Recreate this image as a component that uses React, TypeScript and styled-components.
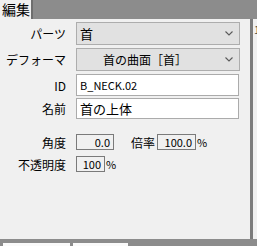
import React from "react";
import styled, { createGlobalStyle } from "styled-components";

const GlobalStyle = createGlobalStyle`
  html, body {
    margin: 0;
    padding: 0;
    background: #8c8c8c;
  }
  * {
    box-sizing: border-box;
  }
`;

const Frame = styled.div`
  width: 257px;
  height: 246px;
  display: grid;
  grid-template-rows: 19px 220px 1fr;
  background: #8c8c8c;
  overflow: hidden;
  font-family: "Noto Sans CJK JP", "Noto Sans", sans-serif;
  font-size: 12px;
  color: #000;
`;

const TabStrip = styled.div`
  display: flex;
  align-items: stretch;
`;

const Tab = styled.div`
  width: 33px;
  background: #f0f0f0;
  border-right: 2px solid #6e6e6e;
  font-size: 14px;
  line-height: 19px;
  padding-left: 2px;
`;

const Middle = styled.div`
  display: flex;
`;

const Panel = styled.div`
  width: 250px;
  background: #f0f0f0;
  display: flex;
  flex-direction: column;
  padding-top: 3px;
`;

const SideBorder = styled.div`
  width: 3px;
  background: #7c7c7c;
`;

const SidePane = styled.div`
  flex: 1;
  background: #f0f0f0;
  font-size: 11px;
  line-height: 14px;
  padding-top: 3px;
  padding-left: 1px;
  color: #444;
  overflow: hidden;
`;

const Row = styled.div<{ $h: number; $gap?: number }>`
  display: flex;
  align-items: center;
  height: ${(p) => p.$h}px;
  margin-bottom: ${(p) => p.$gap ?? 3}px;
`;

const Label = styled.div`
  width: 66px;
  text-align: right;
  margin-right: 10px;
  white-space: nowrap;
`;

const Select = styled.div<{ $center?: boolean }>`
  width: 164px;
  height: 100%;
  background: #e1e1e1;
  border: 1px solid #adadad;
  display: flex;
  align-items: center;
  padding-left: ${(p) => (p.$center ? 26 : 3)}px;
  padding-right: 6px;
  font-size: ${(p) => (p.$center ? 12 : 13)}px;
`;

const SelectText = styled.span`
  flex: 1;
  white-space: nowrap;
`;

const TextBox = styled.div<{ $latin?: boolean }>`
  width: 163px;
  height: 100%;
  background: #fff;
  border: 1px solid #ababab;
  display: flex;
  align-items: center;
  padding-left: 3px;
  font-size: ${(p) => (p.$latin ? 11 : 13)}px;
  white-space: nowrap;
`;

const NumBox = styled.div<{ $w: number }>`
  width: ${(p) => p.$w}px;
  height: 16px;
  background: #f0f0f0;
  border: 1px solid #7a7a7a;
  text-align: right;
  padding-right: 3px;
  line-height: 14px;
  font-size: 11px;
`;

const InlineLabel = styled.span`
  margin-left: 17px;
  margin-right: 2px;
`;

const Unit = styled.span`
  font-size: 11px;
  margin-left: 1px;
`;

const BottomStrip = styled.div`
  display: flex;
  align-items: flex-end;
  gap: 3px;
  padding-left: 3px;
`;

const BottomTab = styled.div<{ $w: number }>`
  width: ${(p) => p.$w}px;
  height: 3px;
  background: #fafafa;
`;

const Chevron = () => (
  <svg width="8" height="5" viewBox="0 0 8 5">
    <path d="M0.5 0.5 L4 4 L7.5 0.5" fill="none" stroke="#5a5a5a" strokeWidth="1.1" />
  </svg>
);

export default function App() {
  return (
    <>
      <GlobalStyle />
      <Frame>
        <TabStrip>
          <Tab>編集</Tab>
        </TabStrip>
        <Middle>
          <Panel>
            <Row $h={23}>
              <Label>パーツ</Label>
              <Select>
                <SelectText>首</SelectText>
                <Chevron />
              </Select>
            </Row>
            <Row $h={23}>
              <Label>デフォーマ</Label>
              <Select $center>
                <SelectText>首の曲面［首］</SelectText>
                <Chevron />
              </Select>
            </Row>
            <Row $h={22} $gap={2}>
              <Label>ID</Label>
              <TextBox $latin>B_NECK.02</TextBox>
            </Row>
            <Row $h={21} $gap={15}>
              <Label>名前</Label>
              <TextBox>首の上体</TextBox>
            </Row>
            <Row $h={16} $gap={6}>
              <Label>角度</Label>
              <NumBox $w={38}>0.0</NumBox>
              <InlineLabel>倍率</InlineLabel>
              <NumBox $w={39}>100.0</NumBox>
              <Unit>%</Unit>
            </Row>
            <Row $h={16}>
              <Label>不透明度</Label>
              <NumBox $w={29}>100</NumBox>
              <Unit>%</Unit>
            </Row>
          </Panel>
          <SideBorder />
          <SidePane>1</SidePane>
        </Middle>
        <BottomStrip>
          <BottomTab $w={67} />
          <BottomTab $w={55} />
        </BottomStrip>
      </Frame>
    </>
  );
}
